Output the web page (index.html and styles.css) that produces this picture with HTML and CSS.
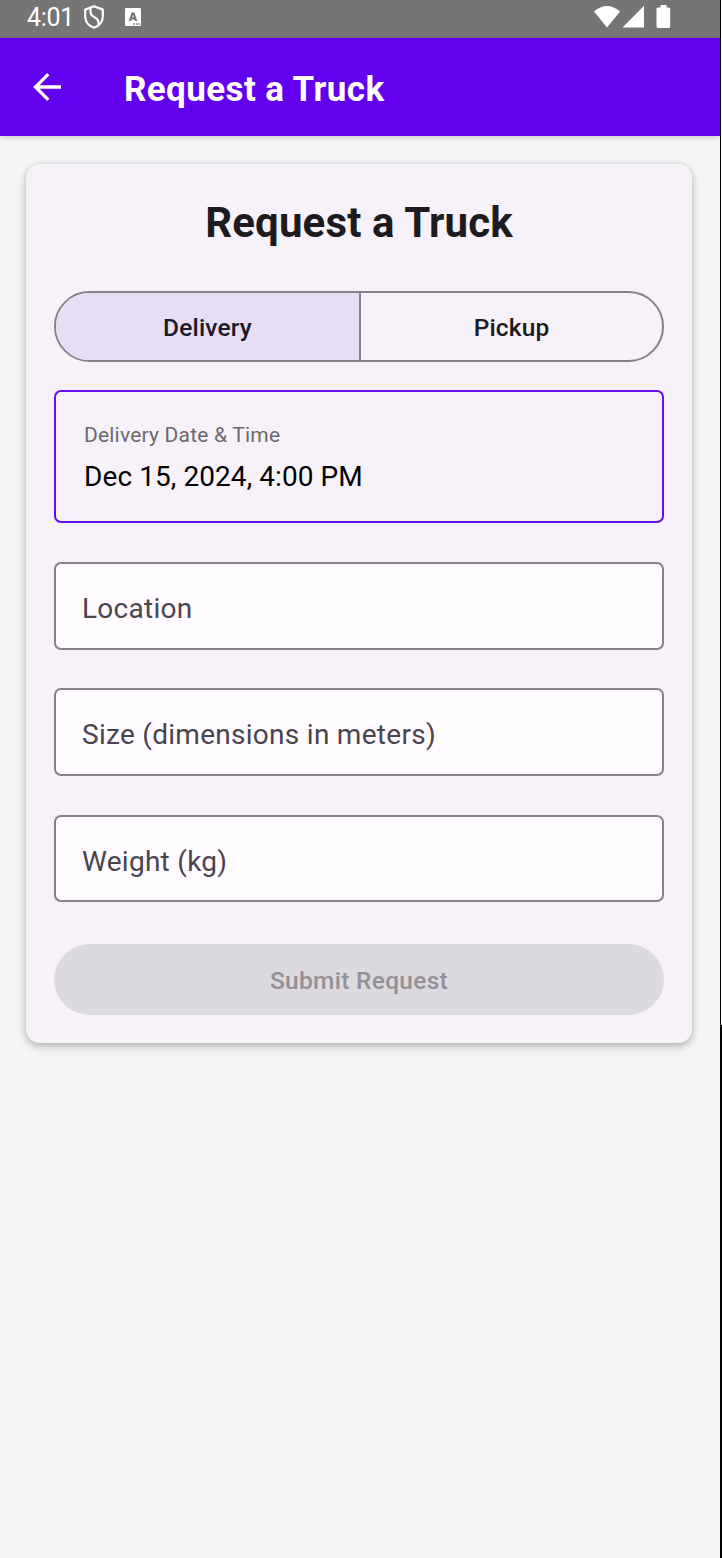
FILE: index.html
```html
<!DOCTYPE html>
<html lang="en">
<head>
<meta charset="utf-8">
<title>Request a Truck</title>
<link rel="stylesheet" href="styles.css">
</head>
<body>
<div class="frame">
  <div class="screen">
    <div class="status">
      <span class="clock">4:01</span>
      <svg class="shield" width="20" height="24" viewBox="0 0 20 24" fill="none" stroke="#fff" stroke-width="2.2" stroke-linejoin="round"><path d="M10 1.3 18.8 4.6V11.500C18.800 16.800 15 21 10 22.700 5 21 1.200 16.800 1.200 11.500V4.600Z"/><path d="M6.500 3V6.500C6.500 8.500 7 9.800 8.500 10.800L12.500 13.600C14.200 15 14.500 16 14.500 17.500V19.500"/></svg>
      <svg class="abadge" width="16" height="18" viewBox="0 0 16 18"><rect width="16" height="18" rx="1.200" fill="#fff"/><path fill-rule="evenodd" d="M3.700 13 6.700 4.500H9.300L12.300 13H9.900L9.400 11.500H6.600L6.100 13ZM7.200 9.600H8.800L8 7Z" fill="#757575"/><path d="M8.500 16H10M11 16H12.500M13.500 16H15" stroke="#757575" stroke-width="1.300"/></svg>
      <svg class="signals" width="78" height="25" viewBox="0 0 78 25" fill="#fff"><path d="M0 6.500Q13-4.500 26 6.500L13 22.500Z"/><path d="M50 .8V22.500H28.500Z"/><path d="M66.500 0H72.500V2.500H74.700Q76.200 2.500 76.200 4V21.500Q76.200 23 74.700 23H64Q62.500 23 62.500 21.500V4Q62.500 2.500 64 2.500H66.500Z"/></svg>
    </div>
    <header class="appbar">
      <svg class="back" width="28" height="28" viewBox="0 0 28 28" fill="none" stroke="#fff" stroke-width="3.300"><path d="M28 14H2.500M15.300 1.200 2.500 14 15.300 26.800"/></svg>
      <span class="appbar-title">Request a Truck</span>
    </header>
    <main class="card">
      <h1 class="title">Request a Truck</h1>
      <div class="segments">
        <div class="segment selected">Delivery</div>
        <div class="segment">Pickup</div>
      </div>
      <div class="date">
        <div class="date-label">Delivery Date &amp; Time</div>
        <div class="date-value">Dec 15, 2024, 4:00 PM</div>
      </div>
      <div class="field">Location</div>
      <div class="field">Size (dimensions in meters)</div>
      <div class="field">Weight (kg)</div>
      <div class="submit">Submit Request</div>
    </main>
  </div>
  <div class="edge"></div>
</div>
</body>
</html>
```
FILE: styles.css
```css
* { box-sizing: border-box; }
body { margin: 0; font-family: Roboto, sans-serif; }
.frame { display: flex; width: 722px; height: 1558px; overflow: hidden; }
.screen { width: 720px; height: 1558px; background: #f5f5f5; }
.edge {
  width: 2px;
  border-left: 1px solid #000;
  background: linear-gradient(#fff 1025px, #000 1025px);
}
.status {
  display: flex;
  align-items: flex-start;
  height: 38px;
  padding: 5px 48px 0 27px;
  background: #757575;
  color: #fff;
}
.clock { width: 57px; font-size: 25px; line-height: 25px; letter-spacing: -.3px; }
.shield { margin: 0 20.500px 0 0; }
.abadge { margin-top: 3px; }
.signals { margin-left: auto; }
.appbar {
  display: flex;
  align-items: center;
  height: 98px;
  padding-left: 33px;
  background: #6200ee;
  color: #fff;
  box-shadow: 0 1px 6px rgba(0, 0, 0, .2);
}
.back { width: 28px; margin: 0 63px 0 0; }
.appbar-title { font-size: 35px; font-weight: 700; line-height: 40px; letter-spacing: .4px; padding-top: 6px; }
.card {
  width: 666px;
  height: 879px;
  margin: 28px 0 0 26px;
  padding: 28px;
  border-radius: 14px;
  background: #f7f2f9;
  box-shadow: 0 4px 8px rgba(0, 0, 0, .22), 0 0 6px rgba(0, 0, 0, .1);
}
.title {
  margin: 0;
  height: 99px;
  font-size: 42px;
  font-weight: 700;
  line-height: 62px;
  letter-spacing: .15px;
  text-align: center;
  color: #1d1b20;
}
.segments {
  display: flex;
  height: 71px;
  border: 2px solid #858089;
  border-radius: 36px;
  overflow: hidden;
}
.segment {
  flex: 1;
  font-size: 24.500px;
  font-weight: 500;
  letter-spacing: .15px;
  line-height: 69px;
  text-align: center;
  color: #1d1b20;
}
.selected { flex: 0 0 305px; background: #e7def6; border-right: 2px solid #858089; color: #1d192b; }
.date {
  height: 133px;
  margin: 28px 0 39px;
  padding: 27px 28px 0;
  border: 2px solid #6a0cef;
  border-radius: 7px;
}
.date-label { font-size: 21px; line-height: 32px; letter-spacing: .2px; color: #6c696d; }
.date-value { font-size: 28px; line-height: 52px; letter-spacing: .08px; color: #000; }
.field {
  height: 87.500px;
  margin-bottom: 38.800px;
  padding-left: 26px;
  border: 2px solid #858089;
  border-radius: 7px;
  background: #fffbff;
  font-size: 28px;
  letter-spacing: .28px;
  line-height: 90px;
  color: #49454f;
}
.submit {
  height: 71px;
  margin-top: 42px;
  border-radius: 36px;
  background: #dcd9e0;
  font-size: 24.500px;
  font-weight: 500;
  letter-spacing: .3px;
  line-height: 73px;
  text-align: center;
  color: #949097;
}
```
